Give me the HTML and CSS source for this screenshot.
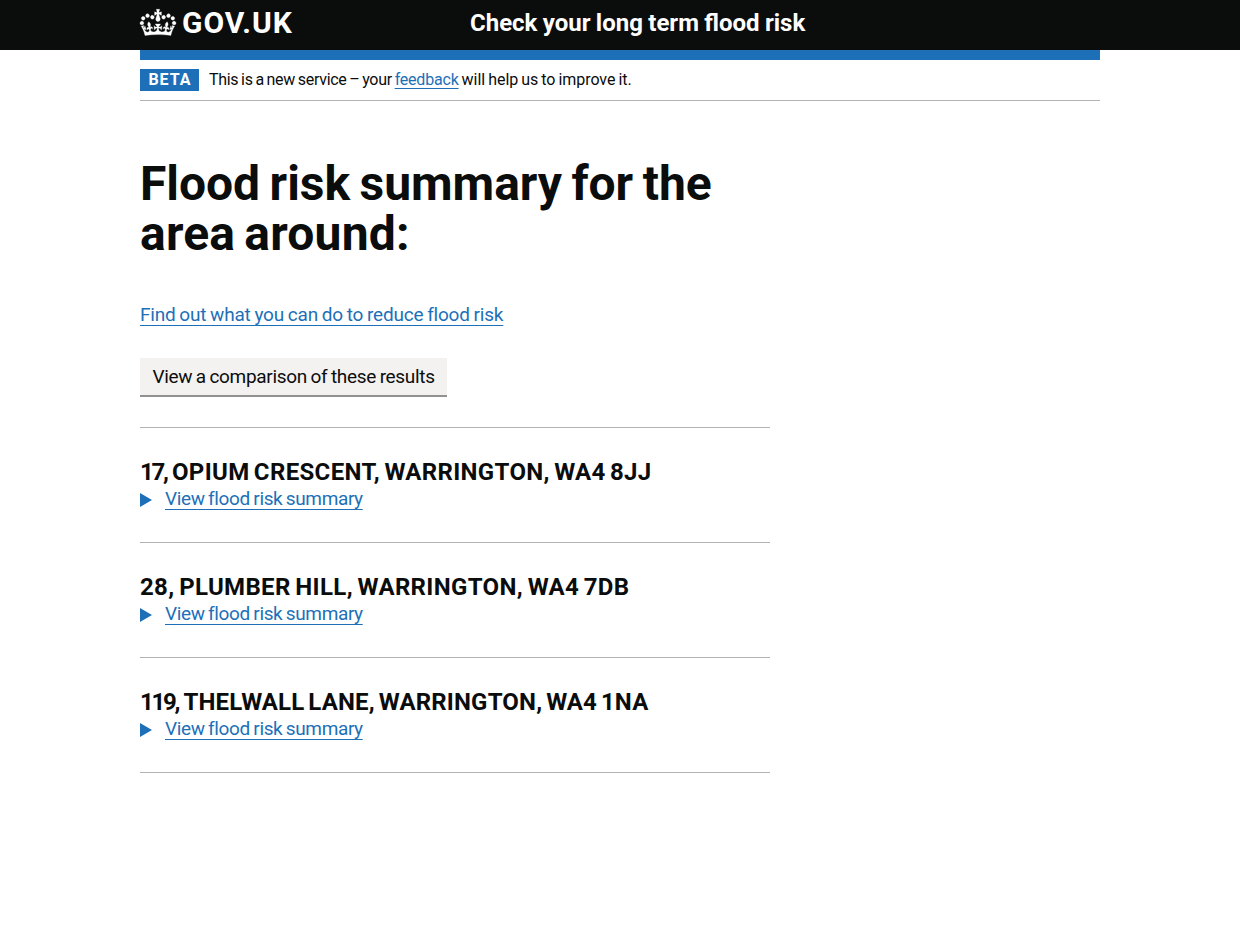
FILE: index.html
```html
<!DOCTYPE html>
<html lang="en">
<head>
<meta charset="utf-8">
<title>Check your long term flood risk - GOV.UK</title>
<link rel="stylesheet" href="styles.css">
</head>
<body>
<header class="header">
  <div class="container header-inner">
    <a class="logo" href="#">
      <svg class="crown" viewBox="0 0 132 97" aria-hidden="true"><path fill="currentColor" stroke="currentColor" stroke-width="1" d="M25 30.2c3.5 1.5 7.7-.2 9.1-3.7 1.5-3.6-.2-7.8-3.9-9.2-3.6-1.4-7.6.3-9.1 3.9-1.4 3.5.3 7.5 3.9 9zM9 39.5c3.6 1.5 7.8-.2 9.2-3.7 1.5-3.6-.2-7.8-3.9-9.1-3.6-1.5-7.6.2-9.1 3.8-1.4 3.5.3 7.5 3.8 9zM4.4 57.2c3.5 1.5 7.7-.2 9.1-3.8 1.5-3.6-.2-7.7-3.9-9.1-3.5-1.5-7.6.3-9.1 3.8-1.4 3.5.3 7.6 3.9 9.1zm38.3-21.4c3.5 1.5 7.7-.2 9.1-3.8 1.5-3.6-.2-7.7-3.9-9.1-3.6-1.5-7.6.3-9.1 3.8-1.3 3.6.4 7.7 3.9 9.1zm64.4-5.6c-3.6 1.5-7.8-.2-9.1-3.7-1.5-3.6.2-7.8 3.8-9.2 3.6-1.4 7.7.3 9.2 3.9 1.3 3.5-.4 7.5-3.9 9zm15.9 9.3c-3.6 1.5-7.7-.2-9.1-3.7-1.5-3.6.2-7.8 3.7-9.1 3.6-1.5 7.7.2 9.2 3.8 1.5 3.5-.3 7.5-3.8 9zm4.7 17.7c-3.6 1.5-7.8-.2-9.2-3.8-1.5-3.6.2-7.7 3.9-9.1 3.6-1.5 7.7.3 9.2 3.8 1.3 3.5-.4 7.6-3.9 9.1zM89.3 35.8c-3.6 1.5-7.8-.2-9.2-3.8-1.4-3.6.2-7.7 3.9-9.1 3.6-1.5 7.7.3 9.2 3.8 1.4 3.6-.3 7.7-3.9 9.1zM69.7 17.7l8.9 4.7V9.3l-8.9 2.8c-.2-.3-.5-.6-.9-.9L72.4 0H59.6l3.5 11.2c-.3.3-.6.5-.9.9l-8.8-2.8v13.1l8.8-4.7c.3.3.6.7.9.9l-5 15.4v.1c-.2.8-.4 1.6-.4 2.4 0 4.1 3.1 7.5 7 8.1h.2c.3 0 .7.1 1 .1.4 0 .7 0 1-.1h.2c4-.6 7.1-4.1 7.1-8.1 0-.8-.1-1.7-.4-2.4V34l-5.1-15.4c.4-.2.7-.6 1-.9zM66 92.8c16.9 0 32.8 1.1 47.1 3.2 4-16.9 8.9-26.7 14-33.5l-9.6-3.4c1 4.9 1.1 7.2 0 10.2-1.5-1.4-3-4.3-4.2-8.7L108.6 76c2.8-2 5-3.2 7.5-3.3-4.4 9.4-10 11.9-13.6 11.2-4.3-.8-6.3-4.6-5.6-7.9 1-4.7 5.7-5.9 8-.5 4.3-8.7-3-11.4-7.6-8.8 7.1-7.2 7.9-13.5 2.1-21.1-8 6.1-8.1 12.3-4.5 20.8-4.7-5.4-12.1-2.5-9.5 6.2 3.4-5.2 7.9-2 7.2 3.1-.6 4.3-6.4 7.8-13.5 7.2-10.3-.9-10.9-8-11.2-13.8 2.5-.5 7.1 1.8 11 7.3L80.2 60c-4.1 4.4-8 5.3-12.3 5.4 1.4-4.4 8-11.6 8-11.6H55.5s6.4 7.2 7.9 11.6c-4.2-.1-8-1-12.3-5.4l1.4 16.4c3.9-5.5 8.5-7.7 10.9-7.3-.3 5.8-.9 12.8-11.1 13.8-7.2.6-12.9-2.9-13.5-7.2-.7-5 3.8-8.3 7.1-3.1 2.7-8.7-4.6-11.6-9.4-6.2 3.7-8.5 3.6-14.7-4.6-20.8-5.8 7.6-5 13.9 2.2 21.1-4.7-2.6-11.9.1-7.7 8.8 2.3-5.5 7.1-4.2 8.1.5.7 3.3-1.3 7.1-5.7 7.9-3.5.7-9-1.8-13.5-11.2 2.5.1 4.7 1.3 7.5 3.3l-4.7-15.4c-1.2 4.4-2.7 7.2-4.3 8.7-1.1-3-.9-5.3 0-10.2l-9.5 3.4c5 6.9 9.9 16.7 14 33.5 14.8-2.1 30.8-3.2 47.7-3.2z"/></svg>
      <span class="logo-text">GOV.UK</span>
    </a>
    <a class="service-name" href="#">Check your long term flood risk</a>
  </div>
</header>
<div class="container">
  <div class="blue-bar"></div>
  <div class="phase-banner">
    <strong class="tag">Beta</strong>
    <span class="phase-text">This is a new service – your <a class="link" href="#">feedback</a><span class="phase-tail"> will help us to improve it.</span></span>
  </div>
  <main class="main">
    <h1 class="title">Flood risk summary for the<br><span class="title-end">area around:</span></h1>
    <p class="reduce"><a class="link" href="#">Find out what you can do to reduce flood risk</a></p>
    <button class="button" type="button">View a comparison of these results</button>
    <section class="result">
      <h2 class="address address-1"><span class="number">17, </span>OPIUM CRESCENT, WARRINGTON, WA4 8JJ</h2>
      <div class="summary"><span class="arrow"></span><a class="link" href="#">View flood risk summary</a></div>
    </section>
    <section class="result">
      <h2 class="address address-2">28, PLUMBER HILL, WARRINGTON, WA4 7DB</h2>
      <div class="summary"><span class="arrow"></span><a class="link" href="#">View flood risk summary</a></div>
    </section>
    <section class="result">
      <h2 class="address address-3"><span class="number">119, </span>THELWALL LANE, WARRINGTON, WA4 1NA</h2>
      <div class="summary"><span class="arrow"></span><a class="link" href="#">View flood risk summary</a></div>
    </section>
  </main>
</div>
</body>
</html>
```
FILE: styles.css
```css
* { box-sizing: border-box; }
body { margin: 0; background: #fff; color: #0b0c0c; font-family: Roboto, "Liberation Sans", sans-serif; font-size: 19px; line-height: 25px; }
.container { width: 960px; margin: 0 auto; }
.header { height: 50px; background: #0b0c0c; color: #fff; }
.header-inner { display: flex; }
.logo { display: flex; width: 330px; color: #fff; text-decoration: none; }
.crown { width: 36px; height: 27px; margin: 9px 6px 0 0; overflow: visible; }
.logo-text { font-size: 30px; font-weight: 700; line-height: 30px; padding-top: 8px; letter-spacing: 1px; }
.service-name { color: #fff; font-size: 24px; font-weight: 700; line-height: 30px; padding-top: 8px; text-decoration: none; word-spacing: -.6px; }
.blue-bar { height: 10px; background: #1d70b8; }
.phase-banner { display: flex; gap: 10px; height: 41px; padding-top: 9px; border-bottom: 1px solid #b1b4b6; font-size: 16px; line-height: 20px; }
.tag { width: 59px; height: 22px; background: #1d70b8; color: #fff; text-align: center; text-transform: uppercase; letter-spacing: 1px; line-height: 22px; padding-left: 1px; }
.phase-text { line-height: 22px; white-space: nowrap; letter-spacing: -.3px; word-spacing: -.9px; }
.phase-tail { letter-spacing: -.04px; }
.phase-text .link { text-underline-offset: 3px; letter-spacing: -.2px; }
.link { color: #1d70b8; text-decoration: underline; text-decoration-thickness: 1px; text-underline-offset: 4px; text-decoration-skip-ink: none; }
.main { width: 630px; padding-top: 58px; }
.title { margin: 0; font-size: 48px; line-height: 50px; font-weight: 700; white-space: nowrap; letter-spacing: -.03px; word-spacing: -2.4px; }
.title-end { letter-spacing: .2px; word-spacing: -3px; }
.reduce { margin: 43px 0 31px; letter-spacing: -.2px; word-spacing: -.7px; }
.button { display: block; width: 307px; height: 39px; margin: 0 0 30px; padding: 0; border: 0; border-bottom: 2px solid #929191; background: #f3f2f1; color: #0b0c0c; font: inherit; white-space: nowrap; letter-spacing: -.33px; word-spacing: -.7px; }
.result { height: 115px; padding-top: 29px; border-top: 1px solid #b1b4b6; }
.result:last-child { height: 116px; border-bottom: 1px solid #b1b4b6; }
.address { margin: 0; font-size: 24px; line-height: 30px; font-weight: 700; white-space: nowrap; }
.address-1 { letter-spacing: .35px; word-spacing: -2px; }
.address-2 { letter-spacing: .34px; word-spacing: -1.6px; }
.address-3 { letter-spacing: .18px; word-spacing: -2.3px; }
.number { letter-spacing: -2.3px; word-spacing: 1.7px; }
.summary { display: flex; align-items: flex-start; gap: 13px; margin-top: -1px; line-height: 25px; letter-spacing: -.38px; word-spacing: -.8px; }
.arrow { margin-top: 7px; border: 7px solid transparent; border-left: 12px solid #1d70b8; border-right: 0; }
```
